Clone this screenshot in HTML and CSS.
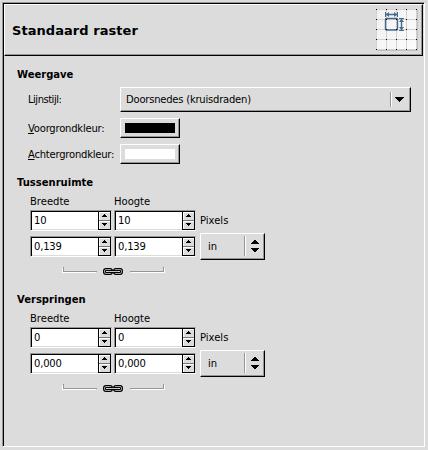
FILE: index.html
```
<!DOCTYPE html>
<html lang="nl">
<head>
<meta charset="utf-8">
<title>Standaard raster</title>
<link rel="stylesheet" href="styles.css">
</head>
<body>
<svg width="0" height="0" class="defs">
  <symbol id="chain" viewBox="0 0 20 7">
    <rect x="1.5" y="1.5" width="7" height="4" rx="1.5" fill="none" stroke="#000" stroke-width="3"/>
    <rect x="11.5" y="1.5" width="7" height="4" rx="1.5" fill="none" stroke="#000" stroke-width="3"/>
    <rect x="1.5" y="1.5" width="7" height="4" rx="1.5" fill="none" stroke="#b4b4b4" stroke-width=".9"/>
    <rect x="11.5" y="1.5" width="7" height="4" rx="1.5" fill="none" stroke="#b4b4b4" stroke-width=".9"/>
    <path d="M5 3.5H15" stroke="#000" stroke-width="3"/>
    <path d="M5 3.5H15" stroke="#c8c8c8"/>
  </symbol>
  <symbol id="spin" viewBox="0 0 13 19">
    <path fill="#dcdcdc" d="M0 0h13v19h-13z"/>
    <path d="M0 0h13v19h-13v-1h12v-17h-11v17h-1z"/>
    <path fill="#fff" d="M1 1h11v1h-11zM1 10h11v1h-11zM1 1h1v17h-1z"/>
    <path fill="#777" d="M1 9h11v1h-11z"/>
    <path d="M4 6h5v-1h-1v-1h-1v-1h-1v1h-1v1h-1zM4 12h5v1h-1v1h-1v1h-1v-1h-1v-1h-1z"/>
  </symbol>
  <symbol id="updown" viewBox="0 0 8 12">
    <path d="M0 4h8v-1h-1v-1h-1v-1h-1v-1h-2v1h-1v1h-1v1h-1zM0 8h8v1h-1v1h-1v1h-1v1h-2v-1h-1v-1h-1v-1h-1z"/>
  </symbol>
</svg>
<main class="frame">
  <header class="header">
    <h1>Standaard raster</h1>
    <svg class="logo" width="44" height="44" viewBox="0 0 44 44">
      <defs><linearGradient id="g" x2="1" y2="1"><stop stop-color="#f0f0f0"/><stop offset="1" stop-color="#fdfdfd"/></linearGradient></defs>
      <rect x="2" y="2" width="41" height="41" fill="#c0c0c0"/>
      <rect x="1" y="1" width="41" height="41" fill="url(#g)"/>
      <path d="M1.5 1V42M11.5 1V42M21.5 1V42M31.5 1V42M41.5 1V42M1 1.5H42M1 11.5H42M1 21.5H42M1 31.5H42M1 41.5H42" stroke="#d2d2d2"/>
      <rect x="10.5" y="10.5" width="12" height="11.5" rx="1" fill="none" stroke="#466a8c" stroke-width="1.4"/>
      <path d="M11 6.5H22M26.5 11V22" stroke="#466a8c" stroke-width="1.4"/>
      <path d="M10.5 4v5M22.5 4v5M24 10.5h5M24 22.5h5" stroke="#466a8c"/>
      <path d="M11 6.5l3-2.5v5zM22 6.5l-3-2.5v5zM26.5 11l-2.5 3h5zM26.5 22l-2.5-3h5z" fill="#466a8c"/>
      <path d="M1 1.5H42M1 11.5H42M1 21.5H42M1 31.5H42M1 41.5H42" stroke="#000" stroke-dasharray="1 9"/>
    </svg>
  </header>
  <section class="display">
    <h2>Weergave</h2>
    <div class="row combo-row"><span class="label l1">Lijnstijl:</span>
      <div class="combo raised"><span class="value">Doorsnedes (kruisdraden)</span><i class="sep"></i><svg width="9" height="5" class="arrow"><path d="M0 0h9v1h-1v1h-1v1h-1v1h-1v1h-1v-1h-1v-1h-1v-1h-1v-1h-1z"/></svg></div>
    </div>
    <div class="row color-row"><span class="label"><u>V</u>oorgrondkleur:</span><div class="color raised"><i class="black"></i></div></div>
    <div class="row color-row"><span class="label"><u>A</u>chtergrondkleur:</span><div class="color raised"><i class="white"></i></div></div>
  </section>
  <section class="group">
    <h2>Tussenruimte</h2>
    <div class="grid">
      <span>Breedte</span><span>Hoogte</span><span></span>
      <div class="spinner"><span>10</span><svg class="spin"><use href="#spin"/></svg></div>
      <div class="spinner"><span>10</span><svg class="spin"><use href="#spin"/></svg></div>
      <span class="pixels">Pixels</span>
      <div class="spinner"><span class="dec">0,139</span><svg class="spin"><use href="#spin"/></svg></div>
      <div class="spinner"><span class="dec">0,139</span><svg class="spin"><use href="#spin"/></svg></div>
      <div class="unit raised"><span>in</span><i class="sep"></i><svg width="8" height="12"><use href="#updown"/></svg></div>
    </div>
    <div class="link"><i class="bl"></i><svg width="20" height="7"><use href="#chain"/></svg><i class="br"></i></div>
  </section>
  <section class="group">
    <h2>Verspringen</h2>
    <div class="grid">
      <span>Breedte</span><span>Hoogte</span><span></span>
      <div class="spinner"><span>0</span><svg class="spin"><use href="#spin"/></svg></div>
      <div class="spinner"><span>0</span><svg class="spin"><use href="#spin"/></svg></div>
      <span class="pixels">Pixels</span>
      <div class="spinner"><span class="dec">0,000</span><svg class="spin"><use href="#spin"/></svg></div>
      <div class="spinner"><span class="dec">0,000</span><svg class="spin"><use href="#spin"/></svg></div>
      <div class="unit raised"><span>in</span><i class="sep"></i><svg width="8" height="12"><use href="#updown"/></svg></div>
    </div>
    <div class="link"><i class="bl"></i><svg width="20" height="7"><use href="#chain"/></svg><i class="br"></i></div>
  </section>
</main>
</body>
</html>
```
FILE: styles.css
```
* { box-sizing: border-box; }
body { margin: 0; padding: 2px; height: 450px; overflow: hidden; background: #dcdcdc; color: #000; font: 10px/13px "DejaVu Sans", sans-serif; white-space: nowrap; }
.defs { display: block; }
svg { display: block; flex: none; }
i { display: block; flex: none; }
h1, h2 { margin: 0; }
.frame { width: 423px; height: 445px; border: 1px solid; border-color: #969696 #fff #fff #969696; box-shadow: inset 1px 1px #000; padding: 1px; }
.raised { border: 1px solid; border-color: #fff #000 #000 #fff; box-shadow: inset -1px -1px #969696; }
.header { width: 419px; height: 52px; border: 1px solid; border-color: #fff #000 #000 #fff; box-shadow: inset -1px -1px #969696; display: flex; align-items: center; justify-content: space-between; padding: 0 3px 0 7px; }
h1 { font-size: 13px; line-height: 16px; padding-top: 2px; letter-spacing: .05px; }
h2 { font-size: 10px; line-height: 14px; height: 14px; }
.display { padding: 12px 0 0 13px; }
.row { display: flex; align-items: center; padding-left: 11px; }
.label { width: 92px; letter-spacing: -.22px; }
.l1 { letter-spacing: -.5px; }
.combo-row { margin-top: 5px; }
.combo { width: 291px; height: 25px; display: flex; align-items: center; padding: 0 6px 0 5px; }
.value { flex: 1; letter-spacing: -.22px; }
.sep { width: 2px; border-left: 1px solid #969696; border-right: 1px solid #fff; height: 15px; }
.arrow { margin-left: 3px; }
.color-row { margin-top: 6px; }
.color { width: 60px; height: 20px; padding: 4px; }
.color i { width: 50px; height: 10px; }
.black { background: #000; }
.white { background: #fff; }
.group { padding: 12px 0 0 13px; height: 117px; }
.grid { display: grid; grid-template-columns: 82px 82px 67px; grid-template-rows: 13px 21px 27px; gap: 2px; padding-left: 13px; margin-top: 5px; align-items: center; }
.spinner { width: 82px; height: 21px; background: #fff; border: 1px solid; border-color: #969696 #dcdcdc #fff #969696; box-shadow: inset 1px 1px #000, inset 0 -1px #dcdcdc; display: flex; justify-content: space-between; align-items: center; padding-left: 3px; }
.dec { letter-spacing: -.2px; }
.spin { width: 13px; height: 19px; }
.pixels { padding-left: 2px; }
.unit { margin-left: 2px; width: 65px; height: 27px; display: flex; align-items: center; padding: 0 5px 0 7px; }
.unit span { flex: 1; }
.unit .sep { height: 20px; margin: 0 5px 1px 0; }
.unit svg { margin-bottom: 1px; }
.link { display: flex; height: 10px; margin-top: 7px; padding-left: 46px; align-items: flex-start; }
.bl, .br { width: 34px; height: 5px; border-bottom: 1px solid #969696; }
.bl { border-left: 1px solid #969696; box-shadow: -1px 1px #fff; }
.br { border-right: 1px solid #969696; box-shadow: 1px 1px #fff; }
.link svg { margin: 1px 7px 0 6px; }
```
